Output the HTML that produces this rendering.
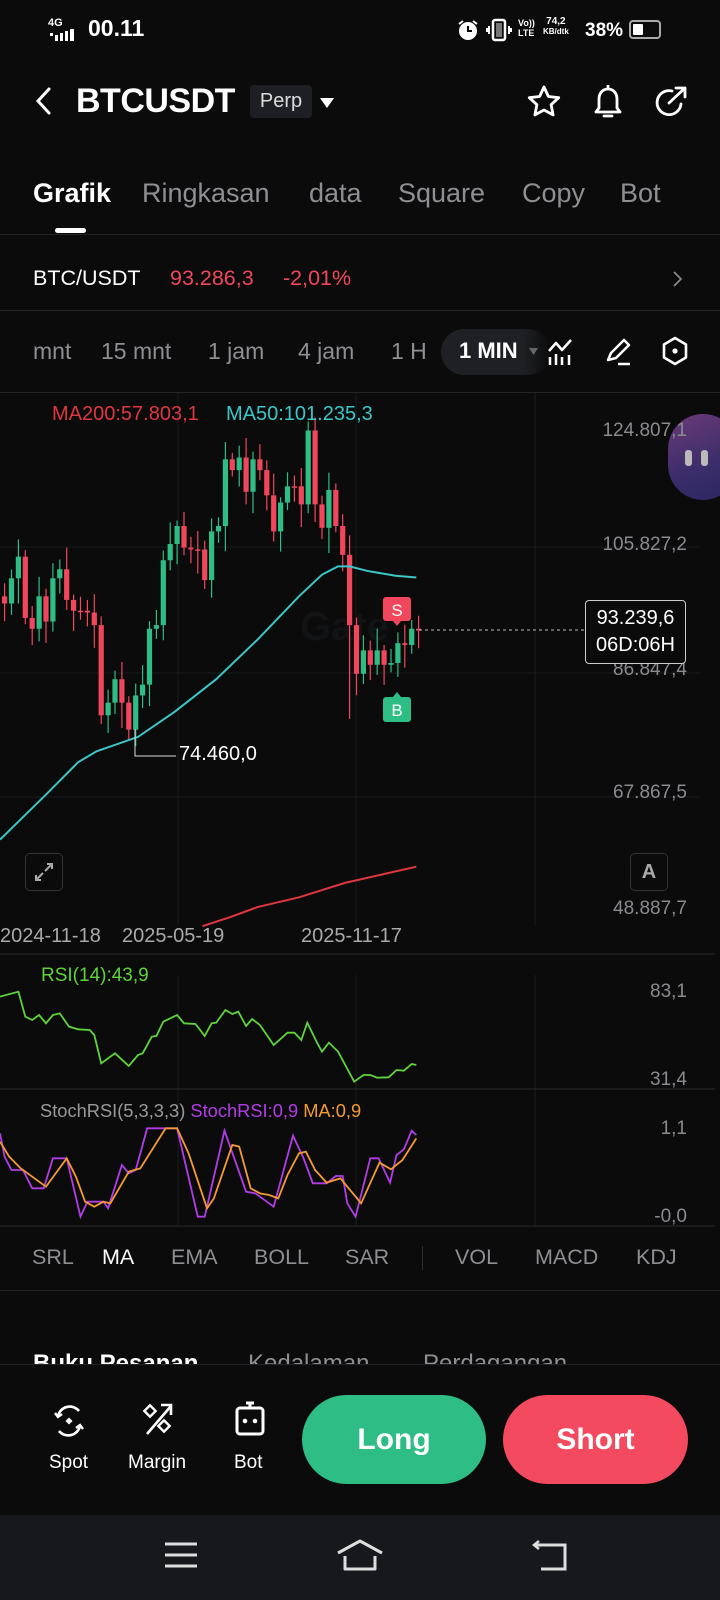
<!DOCTYPE html>
<html><head><meta charset="utf-8">
<style>
*{margin:0;padding:0;box-sizing:border-box}
body{width:720px;height:1600px;background:#0b0b0c;font-family:"Liberation Sans",sans-serif;color:#fff;position:relative;overflow:hidden}
.a{position:absolute;white-space:nowrap;line-height:1}
.g{color:#8e8f93}
.ax{color:#8a8b8f;font-size:19px;text-align:right;right:33px}
.hl{position:absolute;left:0;width:720px;height:1px;background:#222326}
</style></head><body>

<!-- status bar -->
<div class="a" style="left:48px;top:18px;font-size:11px;font-weight:bold;">4G</div>
<div class="a" style="left:88px;top:17px;font-size:23px;font-weight:bold;">00.11</div>
<svg class="a" style="left:50px;top:29px" width="32" height="12"><rect x="0" y="4" width="3" height="3" fill="#fff"/><rect x="5" y="6" width="3" height="6" fill="#fff"/><rect x="10" y="4" width="3" height="8" fill="#fff"/><rect x="15" y="2" width="3" height="10" fill="#fff"/><rect x="20" y="0" width="4" height="12" fill="#fff"/></svg>
<svg class="a" style="left:456px;top:18px" width="24" height="24"><circle cx="12" cy="13" r="9" fill="#fff"/><path d="M12 8v5h4" stroke="#000" stroke-width="2" fill="none"/><path d="M3 6l4-3M21 6l-4-3" stroke="#fff" stroke-width="2"/></svg>
<svg class="a" style="left:486px;top:18px" width="26" height="24"><rect x="7" y="2" width="12" height="20" rx="2" fill="none" stroke="#fff" stroke-width="2.5"/><rect x="10" y="5" width="6" height="14" fill="#777"/><path d="M3 8v8M1 10v4M23 8v8M25 10v4" stroke="#fff" stroke-width="2"/></svg>
<div class="a" style="left:518px;top:18px;font-size:9px;font-weight:bold;line-height:10px">Vo))<br>LTE</div>
<div class="a" style="left:543px;top:17px;font-size:10px;font-weight:bold;line-height:10px;text-align:center">74,2<br><span style="font-size:8px">KB/dtk</span></div>
<div class="a" style="left:585px;top:21px;font-size:19px;font-weight:bold;">38%</div>
<div class="a" style="left:629px;top:20px;width:32px;height:19px;border:2px solid #aaa;border-radius:4px"><div style="position:absolute;left:2px;top:2px;width:10px;height:11px;background:#fff;border-radius:1px"></div></div>

<!-- header -->
<svg class="a" style="left:32px;top:86px" width="24" height="30"><path d="M17 3L6 15l11 12" stroke="#fff" stroke-width="3" fill="none" stroke-linecap="round"/></svg>
<div class="a" style="left:76px;top:84px;font-size:34px;font-weight:bold;letter-spacing:-0.5px">BTCUSDT</div>
<div class="a" style="left:250px;top:85px;width:62px;height:33px;background:#1e1f22;border-radius:4px;font-size:20px;text-align:center;line-height:33px;color:#ddd">Perp</div>
<svg class="a" style="left:319px;top:97px" width="16" height="12"><path d="M1 1h14L8 11z" fill="#fff"/></svg>
<svg class="a" style="left:526px;top:84px" width="36" height="36"><path d="M18 3l4.4 9.5 10.3 1.2-7.6 7 2 10.2L18 26l-9.1 4.9 2-10.2-7.6-7 10.3-1.2z" fill="none" stroke="#fff" stroke-width="2.8" stroke-linejoin="round"/></svg>
<svg class="a" style="left:591px;top:82px" width="34" height="40"><path d="M5 30h24l-3-4V17c0-6-4-10-9-10s-9 4-9 10v9z" fill="none" stroke="#fff" stroke-width="2.8" stroke-linejoin="round"/><path d="M13 34h8" stroke="#fff" stroke-width="2.8" stroke-linecap="round"/><path d="M17 3v4" stroke="#fff" stroke-width="2.8"/></svg>
<svg class="a" style="left:654px;top:84px" width="36" height="36"><path d="M27 20a12 12 0 1 1-9-13" fill="none" stroke="#fff" stroke-width="2.8" stroke-linecap="round"/><path d="M15 19L31 4M22 4h9v9" fill="none" stroke="#fff" stroke-width="2.8" stroke-linecap="round" stroke-linejoin="round"/></svg>

<!-- tabs -->
<div class="a" style="left:33px;top:180px;font-size:27px;font-weight:bold">Grafik</div>
<div class="a g" style="left:142px;top:180px;font-size:27px">Ringkasan</div>
<div class="a g" style="left:309px;top:180px;font-size:27px">data</div>
<div class="a g" style="left:398px;top:180px;font-size:27px">Square</div>
<div class="a g" style="left:522px;top:180px;font-size:27px">Copy</div>
<div class="a g" style="left:620px;top:180px;font-size:27px">Bot</div>
<div class="a" style="left:55px;top:228px;width:31px;height:5px;border-radius:3px;background:#fff"></div>
<div class="hl" style="top:234px"></div>

<div class="a" style="left:33px;top:268px;font-size:21.5px;">BTC/USDT</div>
<div class="a" style="left:170px;top:268px;font-size:21.5px;color:#f0475c">93.286,3</div>
<div class="a" style="left:283px;top:268px;font-size:21.5px;color:#f0475c">-2,01%</div>
<svg class="a" style="left:672px;top:270px" width="12" height="18"><path d="M2 2l7 7-7 7" stroke="#888" stroke-width="1.8" fill="none"/></svg>
<div class="hl" style="top:310px"></div>

<!-- timeframe -->
<div class="a g" style="left:33px;top:340px;font-size:23px">mnt</div>
<div class="a g" style="left:101px;top:340px;font-size:23px">15 mnt</div>
<div class="a g" style="left:208px;top:340px;font-size:23px">1 jam</div>
<div class="a g" style="left:298px;top:340px;font-size:23px">4 jam</div>
<div class="a g" style="left:391px;top:340px;font-size:23px">1 H</div>
<div class="a" style="left:441px;top:329px;width:110px;height:46px;border-radius:23px;background:linear-gradient(90deg,#1f2023 75%,#0b0b0c)"></div>
<div class="a" style="left:459px;top:340px;font-size:22px;font-weight:bold">1 MIN</div>
<svg class="a" style="left:529px;top:348px" width="10" height="8"><path d="M0 0h9L4.5 7z" fill="#666"/></svg>
<svg class="a" style="left:546px;top:335px" width="30" height="34"><path d="M3 16l7-8 6 7 9-10" stroke="#fff" stroke-width="2.5" fill="none" stroke-linejoin="round"/><path d="M4 22v8M10 19v11M16 22v8M23 20v10" stroke="#fff" stroke-width="2.5"/></svg>
<svg class="a" style="left:603px;top:336px" width="30" height="32"><path d="M5 24l3-7 13-13 5 5-13 13-8 2z" fill="none" stroke="#fff" stroke-width="2.5" stroke-linejoin="round"/><path d="M15 28h12" stroke="#fff" stroke-width="2.5"/></svg>
<svg class="a" style="left:661px;top:336px" width="28" height="32"><path d="M14 2l11 6.5v13L14 28 3 21.5v-13z" fill="none" stroke="#fff" stroke-width="2.6" stroke-linejoin="round"/><circle cx="14" cy="15" r="2.6" fill="#fff"/></svg>
<div class="hl" style="top:392px"></div>

<!-- chart svg -->
<svg id="ch" class="a" style="left:0;top:0" width="720" height="1600">
<g stroke="#1a1b1e" stroke-width="1">
<line x1="0" y1="547" x2="700" y2="547"/><line x1="0" y1="673" x2="700" y2="673"/><line x1="0" y1="797" x2="700" y2="797"/>
<line x1="178" y1="393" x2="178" y2="925"/><line x1="356" y1="393" x2="356" y2="925"/><line x1="535" y1="393" x2="535" y2="925"/>
<line x1="178" y1="975" x2="178" y2="1226"/><line x1="356" y1="975" x2="356" y2="1226"/><line x1="535" y1="975" x2="535" y2="1226"/>
</g>
<line x1="0" y1="954" x2="715" y2="954" stroke="#2a2b2e"/>
<line x1="0" y1="1089" x2="715" y2="1089" stroke="#2a2b2e"/>
<line x1="0" y1="1226" x2="715" y2="1226" stroke="#2a2b2e"/>
<text x="300" y="640" font-family="Liberation Sans" font-weight="bold" font-size="40" fill="#121315">Gate</text>
<g id="candles"></g>
<polyline id="ma50" fill="none" stroke="#3cc6c8" stroke-width="2"/>
<polyline id="ma200" fill="none" stroke="#e0373f" stroke-width="2"/>
<path d="M135 729V756H176" stroke="#ddd" stroke-width="1" fill="none"/>
<line x1="419" y1="630" x2="585" y2="630" stroke="#bbb" stroke-dasharray="3 3"/>
<polyline id="rsi" fill="none" stroke="#5ed43a" stroke-width="1.8"/>
<polyline id="st1" fill="none" stroke="#b23de8" stroke-width="1.8"/>
<polyline id="st2" fill="none" stroke="#f49a32" stroke-width="1.8"/>
<rect x="383" y="597" width="28" height="24" rx="3" fill="#f0475c"/><path d="M393 621l4 5 4-5z" fill="#f0475c"/>
<text x="397" y="616" text-anchor="middle" font-family="Liberation Sans" font-size="17" fill="#fff">S</text>
<rect x="383" y="697" width="28" height="25" rx="3" fill="#2dbd85"/><path d="M393 697l4-5 4 5z" fill="#2dbd85"/>
<text x="397" y="716" text-anchor="middle" font-family="Liberation Sans" font-size="17" fill="#fff">B</text>
</svg>

<div class="a" style="left:668px;top:414px;width:70px;height:86px;border-radius:43px;background:linear-gradient(160deg,#6b3a78,#3a2d6a 60%,#2a2660)"></div>
<div class="a" style="left:685px;top:450px;width:7px;height:16px;border-radius:3px;background:#bbb"></div>
<div class="a" style="left:701px;top:450px;width:7px;height:16px;border-radius:3px;background:#bbb"></div>
<div class="a" style="left:52px;top:404px;font-size:20px;color:#e0373f">MA200:57.803,1</div>
<div class="a" style="left:226px;top:404px;font-size:20px;color:#3cc6c8">MA50:101.235,3</div>
<div class="a ax" style="top:421px">124.807,1</div>
<div class="a ax" style="top:535px">105.827,2</div>
<div class="a ax" style="top:660px">86.847,4</div>
<div class="a ax" style="top:783px">67.867,5</div>
<div class="a ax" style="top:899px">48.887,7</div>
<div class="a" style="left:179px;top:744px;font-size:20px;color:#fff">74.460,0</div>
<div class="a" style="left:585px;top:600px;width:101px;height:64px;border:1px solid #ccc;border-radius:4px;background:#0b0b0c;font-size:20px;text-align:center;line-height:27px;padding-top:4px">93.239,6<br>06D:06H</div>
<div class="a" style="left:25px;top:853px;width:38px;height:38px;border:1.5px solid #333;border-radius:5px"></div>
<svg class="a" style="left:34px;top:862px" width="20" height="20"><path d="M11 9l7-7M13 2h5v5M9 11l-7 7M2 13v5h5" stroke="#aaa" stroke-width="2" fill="none"/></svg>
<div class="a" style="left:630px;top:853px;width:38px;height:38px;border:1.5px solid #333;border-radius:5px;font-size:20px;font-weight:bold;color:#aaa;text-align:center;line-height:36px">A</div>
<div class="a" style="left:0;top:926px;font-size:20px;color:#aaa">2024-11-18</div>
<div class="a" style="left:122px;top:926px;font-size:20px;color:#aaa">2025-05-19</div>
<div class="a" style="left:301px;top:926px;font-size:20px;color:#aaa">2025-11-17</div>

<div class="a" style="left:41px;top:966px;font-size:19px;color:#5ed43a">RSI(14):43,9</div>
<div class="a ax" style="top:982px">83,1</div>
<div class="a ax" style="top:1070px">31,4</div>
<div class="a" style="left:40px;top:1102px;font-size:18.3px;color:#999">StochRSI(5,3,3,3) <span style="color:#b23de8">StochRSI:0,9</span> <span style="color:#f49a32">MA:0,9</span></div>
<div class="a ax" style="top:1119px">1,1</div>
<div class="a ax" style="top:1207px">-0,0</div>

<!-- indicators -->
<div class="a g" style="left:32px;top:1247px;font-size:21.5px">SRL</div>
<div class="a" style="left:102px;top:1247px;font-size:21.5px">MA</div>
<div class="a g" style="left:171px;top:1247px;font-size:21.5px">EMA</div>
<div class="a g" style="left:254px;top:1247px;font-size:21.5px">BOLL</div>
<div class="a g" style="left:345px;top:1247px;font-size:21.5px">SAR</div>
<div class="a" style="left:422px;top:1246px;width:1px;height:24px;background:#2a2b2e"></div>
<div class="a g" style="left:455px;top:1247px;font-size:21.5px">VOL</div>
<div class="a g" style="left:535px;top:1247px;font-size:21.5px">MACD</div>
<div class="a g" style="left:636px;top:1247px;font-size:21.5px">KDJ</div>
<div class="hl" style="top:1290px"></div>

<div class="a" style="left:0;top:1340px;width:720px;height:24px;overflow:hidden">
<div class="a" style="left:33px;top:12px;font-size:24px;font-weight:bold">Buku Pesanan</div>
<div class="a g" style="left:248px;top:12px;font-size:24px">Kedalaman</div>
<div class="a g" style="left:423px;top:12px;font-size:24px">Perdagangan</div>
</div>
<div class="hl" style="top:1364px"></div>

<!-- bottom bar -->
<svg class="a" style="left:51px;top:1402px" width="36" height="38"><path d="M7 14a12 12 0 0 1 21-5M29 24a12 12 0 0 1-21 5" fill="none" stroke="#fff" stroke-width="2.6"/><path d="M4 11l3 4 4-3M32 27l-3-4-4 3" fill="none" stroke="#fff" stroke-width="2.4"/><rect x="15.5" y="16.5" width="5" height="5" transform="rotate(45 18 19)" fill="#fff"/></svg>
<div class="a" style="left:49px;top:1453px;font-size:19px">Spot</div>
<svg class="a" style="left:141px;top:1400px" width="36" height="38"><path d="M6 34L30 6M20 5h10v10" fill="none" stroke="#fff" stroke-width="2.6"/><rect x="5" y="7" width="8" height="8" transform="rotate(45 9 11)" fill="none" stroke="#fff" stroke-width="2.4"/><rect x="19" y="22" width="8" height="8" transform="rotate(45 23 26)" fill="none" stroke="#fff" stroke-width="2.4"/></svg>
<div class="a" style="left:128px;top:1453px;font-size:19px">Margin</div>
<svg class="a" style="left:232px;top:1398px" width="36" height="42"><rect x="5" y="10" width="26" height="26" rx="3" fill="none" stroke="#fff" stroke-width="3"/><path d="M14 5h8" stroke="#fff" stroke-width="3"/><path d="M18 5v5" stroke="#fff" stroke-width="3"/><circle cx="13" cy="23" r="2.3" fill="#fff"/><circle cx="23" cy="23" r="2.3" fill="#fff"/></svg>
<div class="a" style="left:234px;top:1453px;font-size:19px">Bot</div>
<div class="a" style="left:302px;top:1395px;width:184px;height:89px;border-radius:45px;background:#2dbd85;font-size:30px;font-weight:bold;text-align:center;line-height:89px">Long</div>
<div class="a" style="left:503px;top:1395px;width:185px;height:89px;border-radius:45px;background:#f34a5f;font-size:30px;font-weight:bold;text-align:center;line-height:89px">Short</div>

<div class="a" style="left:0;top:1515px;width:720px;height:85px;background:#17181b"></div>
<svg class="a" style="left:163px;top:1540px" width="36" height="30"><path d="M2 4h32M2 15h32M2 26h32" stroke="#ddd" stroke-width="3"/></svg>
<svg class="a" style="left:336px;top:1538px" width="48" height="34"><path d="M2 15L24 3l22 12" fill="none" stroke="#ddd" stroke-width="3" stroke-linejoin="round"/><path d="M9 18v13h30V18" fill="none" stroke="#ddd" stroke-width="3" stroke-linejoin="round"/></svg>
<svg class="a" style="left:530px;top:1540px" width="38" height="32"><path d="M4 5h31v24H11" fill="none" stroke="#ddd" stroke-width="3"/><path d="M9 1L4 5l5 4" fill="none" stroke="#ddd" stroke-width="2.5"/></svg>

<script>
var NS="http://www.w3.org/2000/svg";
function X(z){return z*0.46} function Y(z){return 380+z*0.3605}
var c=[[10,620],[25,550],[40,490],[55,660],[70,690],[85,600],[100,670],[115,550],[130,525],[145,610],[160,640],[175,640],[190,645],[205,680],[220,930],[235,895],[250,830],[265,895],[280,970],[295,875],[310,845],[325,690],[340,680],[355,500],[370,455],[385,405],[400,465],[415,470],[430,470],[445,555],[460,420],[475,405],[490,220],[505,250],[520,215],[535,310],[550,220],[565,250],[580,320],[595,420],[610,340],[625,295],[640,295],[655,345],[670,140],[685,345],[700,410],[715,305],[730,405],[745,485],[760,680],[775,815],[790,750],[805,790],[820,750],[835,790],[850,785],[865,730],[880,735],[895,690],[910,695]];
var g=document.getElementById("candles"),prev=600;
var wk=[60,40,80,30,55,90,35,70,45,100,25,65,50,85,40];
c.forEach(function(p,i){var o=prev,cl=p[1];prev=cl;var x=X(p[0]);
var up=cl<o;var col=up?"#2dbd85":"#f0475c";
var top=Math.min(o,cl),bot=Math.max(o,cl);if(bot-top<4)bot=top+4;
var wt=top-wk[i%15]*0.6,wb=bot+wk[(i+7)%15]*0.7;
if(i==44)wt=115;if(i==50)wb=940;if(i==18)wb=1000;
var l=document.createElementNS(NS,"line");l.setAttribute("x1",x);l.setAttribute("x2",x);l.setAttribute("y1",Y(wt));l.setAttribute("y2",Y(wb));l.setAttribute("stroke",col);l.setAttribute("stroke-width","1.2");g.appendChild(l);
var r=document.createElementNS(NS,"rect");r.setAttribute("x",x-2.6);r.setAttribute("width",5.2);r.setAttribute("y",Y(top));r.setAttribute("height",Y(bot)-Y(top));r.setAttribute("fill",col);g.appendChild(r);});
function pl(id,pts,fx,fy){document.getElementById(id).setAttribute("points",pts.map(function(p){return fx(p[0])+","+fy(p[1])}).join(" "))}
pl("ma50",[[0,1275],[100,1150],[170,1060],[210,1030],[300,990],[380,920],[470,830],[560,720],[650,600],[700,540],[735,517],[760,517],[800,530],[860,543],[905,548]],X,Y);
pl("ma200",[[440,1515],[500,1490],[560,1462],[650,1435],[750,1395],[905,1350]],X,Y);
var Y2=function(z){return 940+z/3};
pl("rsi",[[0,170],[40,155],[55,230],[70,240],[85,225],[100,250],[115,225],[130,220],[150,260],[170,268],[195,270],[205,285],[220,370],[250,340],[280,378],[300,345],[310,340],[330,290],[340,288],[355,245],[385,225],[400,250],[425,252],[445,288],[460,250],[470,248],[490,210],[505,222],[518,215],[535,258],[548,237],[565,255],[595,315],[625,278],[640,278],[655,300],[668,248],[690,310],[700,335],[715,308],[735,335],[770,425],[790,405],[805,405],[820,413],[845,412],[862,390],[878,392],[895,372],[905,375]],X,Y2);
pl("st1",[[0,580],[10,650],[25,690],[50,690],[70,745],[95,745],[115,655],[145,655],[175,830],[190,785],[225,785],[235,805],[265,675],[280,700],[295,690],[320,565],[385,565],[430,830],[445,830],[488,572],[535,755],[555,760],[595,800],[637,587],[660,655],[680,730],[710,730],[730,708],[745,708],[755,790],[773,830],[805,655],[823,655],[848,728],[862,645],[878,628],[895,572],[905,585]],X,Y2);
pl("st2",[[0,605],[20,650],[45,685],[100,740],[145,655],[165,710],[185,785],[205,800],[225,785],[240,790],[280,695],[305,685],[360,565],[385,565],[410,640],[450,805],[465,775],[505,615],[520,620],[545,745],[565,760],[585,765],[605,775],[625,705],[650,640],[665,635],[685,690],[710,728],[740,715],[785,790],[825,668],[850,688],[875,660],[905,595]],X,Y2);
</script>
</body></html>
